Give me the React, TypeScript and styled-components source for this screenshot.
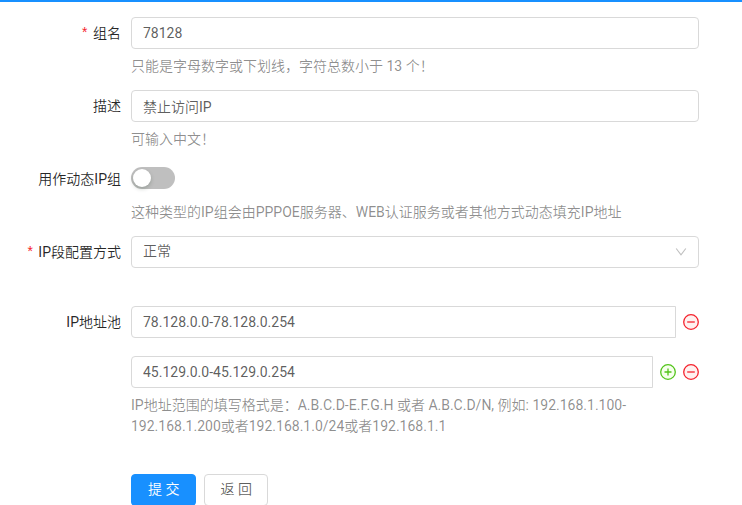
import React, { useState } from 'react';
import styled, { createGlobalStyle } from 'styled-components';

const GlobalStyle = createGlobalStyle`
  * { box-sizing: border-box; }
  body {
    margin: 0;
    background: #fff;
    color: rgba(0, 0, 0, 0.85);
    font: 400 14px/21px Roboto, "Noto Sans CJK SC DemiLight", "Noto Sans CJK SC", sans-serif;
  }
  input, select, button { font: inherit; color: inherit; }
`;

const Page = styled.main`
  border-top: 2px solid #1890ff;
  padding: 15px 43px 0 0;
  overflow: hidden;
`;

const Row = styled.div<{ $gap?: number }>`
  display: grid;
  grid-template-columns: 121px minmax(0, 1fr);
  column-gap: 10px;
  margin-bottom: ${(p) => p.$gap ?? 13}px;
`;

const Label = styled.label<{ $required?: boolean }>`
  height: 32px;
  line-height: 32px;
  text-align: right;
  white-space: nowrap;
  &::before {
    content: ${(p) => (p.$required ? '"*"' : 'none')};
    margin-right: 4px;
    color: #f5222d;
    font-family: "Liberation Mono", monospace;
  }
`;

const Content = styled.div`
  grid-column: 2;
  min-width: 0;
`;

const TextInput = styled.input`
  display: block;
  flex: 1;
  width: 100%;
  min-width: 0;
  height: 32px;
  padding: 0 11px;
  border: 1px solid #d9d9d9;
  border-radius: 4px;
  background: #fff;
  color: rgba(0, 0, 0, 0.65);
  outline: none;
  &:focus { border-color: #40a9ff; }
`;

const PoolInput = styled(TextInput)`
  border-radius: 4px 0 0 4px;
`;

const Hint = styled.p`
  margin: 0;
  padding-top: 7px;
  color: rgba(0, 0, 0, 0.45);
`;

const Switch = styled.input`
  appearance: none;
  display: block;
  width: 44px;
  height: 22px;
  margin: 4px 0 6px;
  padding: 2px;
  border-radius: 11px;
  background: #bfbfbf;
  cursor: pointer;
  &::before {
    content: "";
    display: block;
    width: 18px;
    height: 18px;
    border-radius: 50%;
    background: #fff;
    box-shadow: 0 2px 4px rgba(0, 35, 11, 0.2);
  }
  &:checked { background: #1890ff; }
  &:checked::before { margin-left: auto; }
`;

const SelectBox = styled.div`
  display: grid;
  align-items: center;
  & > * { grid-area: 1 / 1; }
  & > svg { justify-self: end; margin-right: 12px; pointer-events: none; }
`;

const Select = styled.select`
  appearance: none;
  width: 100%;
  height: 32px;
  padding: 0 11px 2px;
  border: 1px solid #d9d9d9;
  border-radius: 4px;
  background: #fff;
  color: rgba(0, 0, 0, 0.65);
`;

const PoolRow = styled.div`
  display: flex;
  align-items: center;
  gap: 7px;
  & + & { margin-top: 18px; }
`;

const IconButton = styled.button<{ $color: string; $tint: string }>`
  display: flex;
  padding: 0;
  border: 0;
  background: none;
  color: ${(p) => p.$color};
  cursor: pointer;
  & circle { fill: ${(p) => p.$tint}; }
`;

const Actions = styled.div`
  display: flex;
  gap: 8px;
`;

const Button = styled.button<{ $primary?: boolean }>`
  height: 32px;
  padding: 0 ${(p) => (p.$primary ? 16 : 15)}px 2px;
  border: 1px solid ${(p) => (p.$primary ? '#1890ff' : '#d9d9d9')};
  border-radius: 4px;
  background: ${(p) => (p.$primary ? '#1890ff' : '#fff')};
  color: ${(p) => (p.$primary ? '#fff' : 'rgba(0, 0, 0, 0.65)')};
  cursor: pointer;
`;

const CircleIcon = ({ plus = false }: { plus?: boolean }) => (
  <svg width="16" height="16" viewBox="0 0 16 16" fill="none" stroke="currentColor" strokeWidth="1.3" aria-hidden="true">
    <circle cx="8" cy="8" r="7.3" />
    <path d={plus ? 'M4.5 8h7M8 4.5v7' : 'M4.2 8h7.6'} />
  </svg>
);

const Chevron = () => (
  <svg width="12" height="12" viewBox="0 0 12 12" fill="none" stroke="#bfbfbf" strokeWidth="1.1" aria-hidden="true">
    <path d="M1.2 2.5 6 8.8l4.8-6.3" />
  </svg>
);

const RemoveButton = () => (
  <IconButton type="button" aria-label="删除" $color="#f5222d" $tint="#fff1f0">
    <CircleIcon />
  </IconButton>
);

const AddButton = () => (
  <IconButton type="button" aria-label="添加" $color="#52c41a" $tint="#f6ffed">
    <CircleIcon plus />
  </IconButton>
);

export default function App() {
  const [dynamic, setDynamic] = useState(false);
  return (
    <>
      <GlobalStyle />
      <Page>
        <form onSubmit={(e) => e.preventDefault()}>
          <Row>
            <Label htmlFor="name" $required>组名</Label>
            <Content>
              <TextInput id="name" defaultValue="78128" />
              <Hint>只能是字母数字或下划线，字符总数小于 13 个！</Hint>
            </Content>
          </Row>
          <Row>
            <Label htmlFor="desc">描述</Label>
            <Content>
              <TextInput id="desc" defaultValue="禁止访问IP" />
              <Hint>可输入中文！</Hint>
            </Content>
          </Row>
          <Row>
            <Label htmlFor="dynamic">用作动态IP组</Label>
            <Content>
              <Switch id="dynamic" type="checkbox" role="switch" checked={dynamic} onChange={(e) => setDynamic(e.target.checked)} />
              <Hint>这种类型的IP组会由PPPOE服务器、WEB认证服务或者其他方式动态填充IP地址</Hint>
            </Content>
          </Row>
          <Row $gap={38}>
            <Label htmlFor="mode" $required>IP段配置方式</Label>
            <Content>
              <SelectBox>
                <Select id="mode" defaultValue="normal">
                  <option value="normal">正常</option>
                </Select>
                <Chevron />
              </SelectBox>
            </Content>
          </Row>
          <Row $gap={37}>
            <Label htmlFor="pool">IP地址池</Label>
            <Content>
              <PoolRow>
                <PoolInput id="pool" defaultValue="78.128.0.0-78.128.0.254" />
                <RemoveButton />
              </PoolRow>
              <PoolRow>
                <PoolInput aria-label="IP地址池 2" defaultValue="45.129.0.0-45.129.0.254" />
                <AddButton />
                <RemoveButton />
              </PoolRow>
              <Hint>IP地址范围的填写格式是：A.B.C.D-E.F.G.H 或者 A.B.C.D/N, 例如: 192.168.1.100-192.168.1.200或者192.168.1.0/24或者192.168.1.1</Hint>
            </Content>
          </Row>
          <Row $gap={0}>
            <Content>
              <Actions>
                <Button type="submit" $primary>提 交</Button>
                <Button type="button">返 回</Button>
              </Actions>
            </Content>
          </Row>
        </form>
      </Page>
    </>
  );
}
